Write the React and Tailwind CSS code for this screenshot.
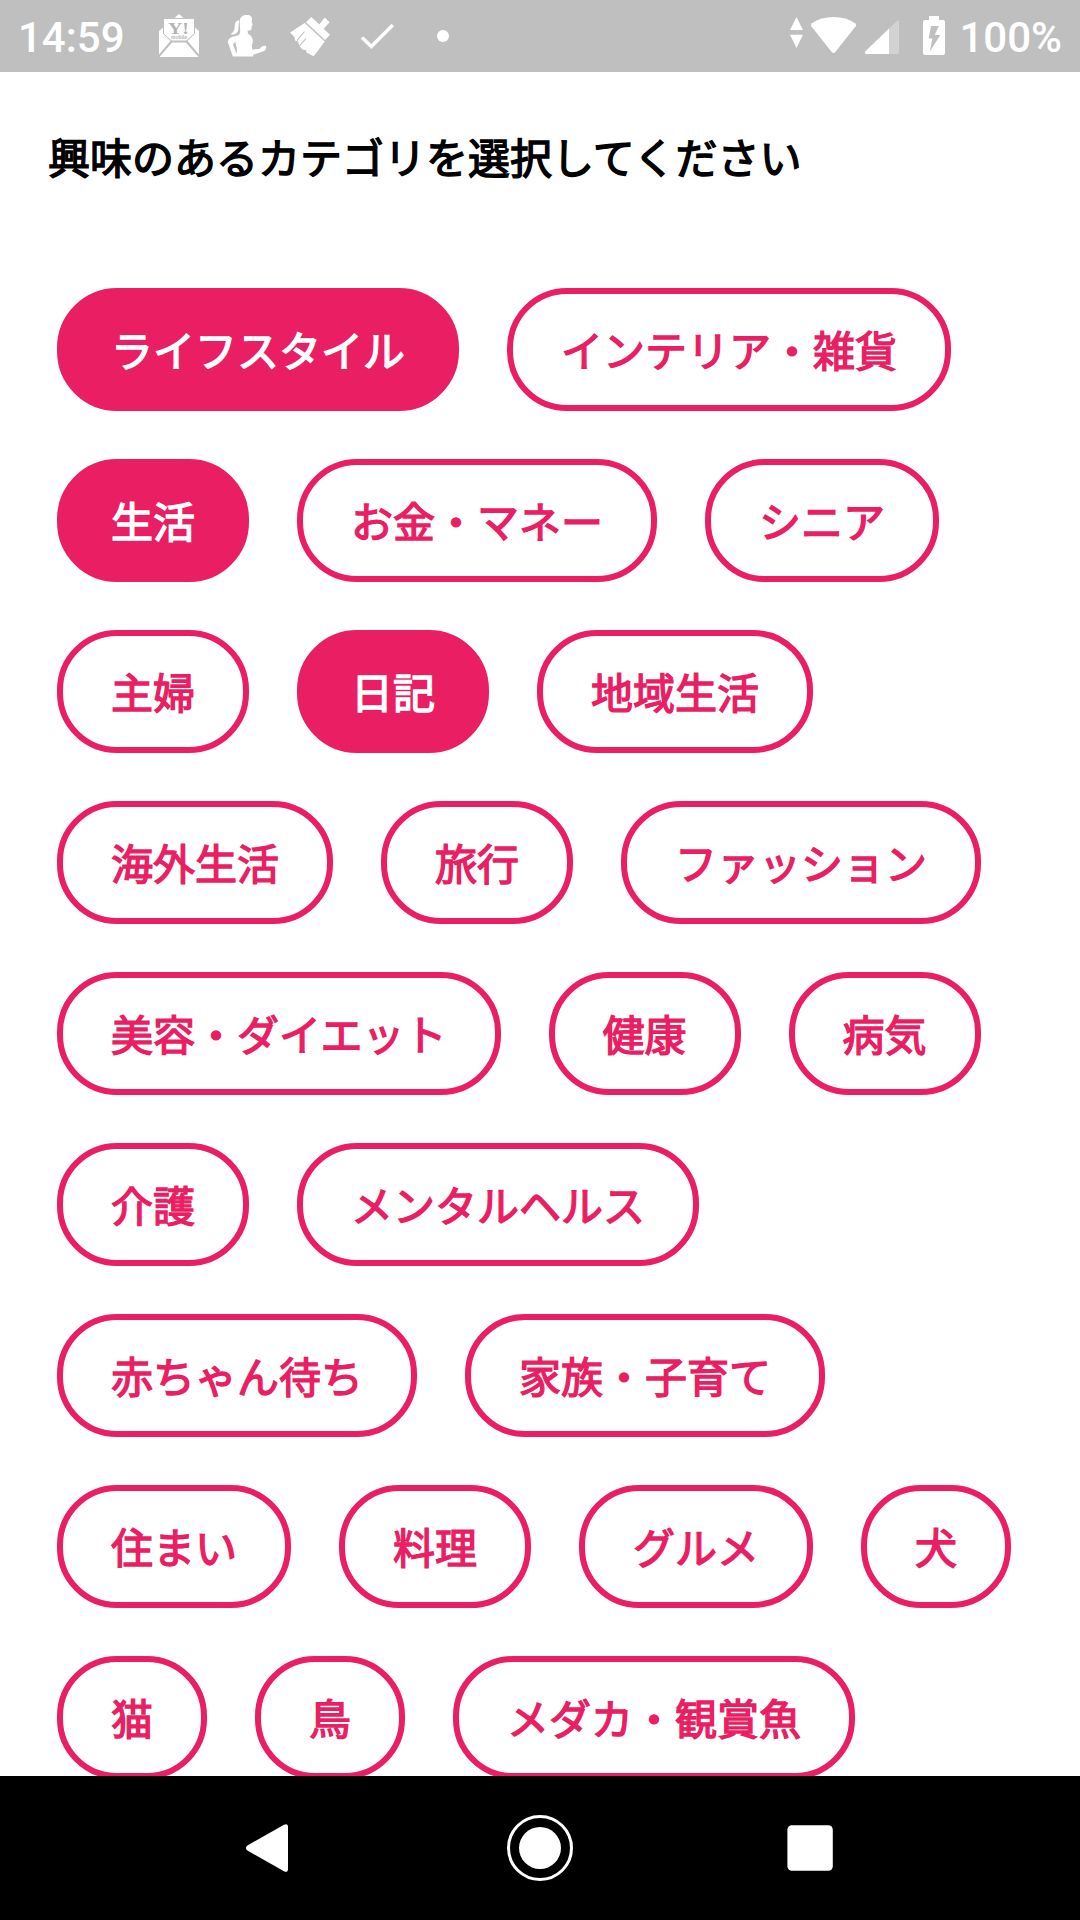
import React from "react";

const ROWS = [
  [["ライフスタイル", true], ["インテリア・雑貨"]],
  [["生活", true], ["お金・マネー"], ["シニア"]],
  [["主婦"], ["日記", true], ["地域生活"]],
  [["海外生活"], ["旅行"], ["ファッション"]],
  [["美容・ダイエット"], ["健康"], ["病気"]],
  [["介護"], ["メンタルヘルス"]],
  [["赤ちゃん待ち"], ["家族・子育て"]],
  [["住まい"], ["料理"], ["グルメ"], ["犬"]],
  [["猫"], ["鳥"], ["メダカ・観賞魚"]],
];

function Chip({ label, selected }) {
  return (
    <button
      className={
        "h-[123px] shrink-0 whitespace-nowrap rounded-[60px] border-6 border-[#e91e63] px-12 pb-[2px] text-[42px] leading-[42px] font-normal [-webkit-text-stroke:1.4px_currentColor] " +
        (selected ? "bg-[#e91e63] text-white" : "bg-white text-[#e91e63]")
      }
    >
      {label}
    </button>
  );
}

function StatusBar() {
  return (
    <header className="flex h-[72px] shrink-0 items-center justify-between bg-[#bfbfbf] pr-[18px] pl-[18px] font-['Roboto',sans-serif] text-[42px] leading-[72px] font-medium text-white">
      <div className="flex items-center">
        <span className="w-[137px] pt-1">14:59</span>
        <div className="flex gap-[18px]">
          {/* mail */}
          <svg className="size-12" viewBox="155 12 48 48" fill="#fff">
            <path d="M174.500 18 179 14l4.500 4z" />
            <path d="M164 19h30v14.500l-7.500 7h-15L164 33.500z" />
            <path d="M163 27.500v6l7.500 7.500L159 54.500V31zM195 27.500v6l-7.500 7.500L199 54.500V31z" />
            <path d="M172 42.500h14L198.500 57h-39z" />
            <text x="178.500" y="33.500" textAnchor="middle" fontSize="17" fontWeight="700" fontFamily="Liberation Serif, serif" fill="#b4b4b4" textLength="21" lengthAdjust="spacingAndGlyphs">Y!</text>
            <text x="179" y="39" textAnchor="middle" fontSize="5.500" fontWeight="700" fontFamily="Liberation Sans, sans-serif" fill="#b4b4b4" textLength="16" lengthAdjust="spacingAndGlyphs">mobile</text>
          </svg>
          {/* runner */}
          <svg className="size-12" viewBox="221 12 48 48" fill="#fff">
            <path d="M239.700 22C239.500 17 243 15 247 15c4 0 5.300 2 5 5l-.3 2 1.100 3.200-1.200.8-.2 3.500c-.5 1.200-2 1.200-3.900 1l.5 3.300c3 1.500 4.800 4 5 7.200l-1.200 4.500.5 4.200 7.500-1c1.500-2.500 4.500-3.500 6.300-2.500.5 2-.5 4.500-2.700 5l-10 3.500-.4 1.800H236.200l.8-7-1.800-8-2.200 3c1 3 3 7 4 12h-4.200L227.800 42c.7-4 3-5 7-5.800 4-.7 5.200-1.700 5.400-5z" />
            <path d="M238.300 20.200c-3.500 1-3.500 4.500-3.700 7.500-.2 3-1.600 5-4.100 6.600 4 1 7.300-1 7.800-4.300.4-2.700.2-6 .8-9z" />
          </svg>
          {/* brush */}
          <svg className="size-12" viewBox="287 12 48 48" fill="#fff">
            <path d="m306 22.300 5.300-5.300 8 7.500 5.500-7 4.800 4.700-6 6.500 6.400 6-5 5.300z" />
            <path d="m304.700 23 20 18.500L318.500 50 313.500 56.300l-7-3.800-.5-2.500-3.500-.5-3-3.500-1.500-4.500-3-1-.5-3.500-4.500-4.500z" />
            <path d="m304.500 31.500-7.500 9M306 38.500l-6.500 7.500" stroke="#bfbfbf" strokeWidth="1.100" fill="none" />
          </svg>
          {/* check */}
          <svg className="size-12" viewBox="353 12 48 48" fill="none" stroke="#fff" strokeWidth="3.400">
            <path d="m362 37.500 9.300 9L392.800 25" />
          </svg>
          <svg className="size-12" viewBox="419 12 48 48" fill="#fff">
            <circle cx="443" cy="36" r="6" />
          </svg>
        </div>
      </div>
      <div className="flex items-center">
        {/* data activity */}
        <svg className="h-[72px] w-[18px]" viewBox="788 0 18 72" fill="#fff">
          <path d="M796.500 17 803 30h-13zM790 34.700h13L796.500 48z" />
        </svg>
        {/* wifi */}
        <svg className="h-[72px] w-[55px]" viewBox="806 0 55 72" fill="#fff">
          <path d="M811.300 26.200q-1.300-1.700.6-3Q821 17 833.500 17t21.600 6.200q1.900 1.300.6 3L835.300 52q-1.800 1.800-3.600 0z" />
        </svg>
        {/* signal */}
        <svg className="h-[72px] w-[50px]" viewBox="861 0 50 72" fill="#fff">
          <path d="M889 28.500V54h-23q-2-.6-.8-2.500z" />
          <path fillOpacity=".3" d="m889 28.500 8.500-8q1.500-1 1.500 1V52q0 2-2 2h-8z" />
        </svg>
        {/* battery */}
        <svg className="h-[72px] w-12" viewBox="911 0 48 72" fill="#fff">
          <path fillRule="evenodd" d="M929 16h10v4h4q2 0 2 2v31q0 2-2 2h-18q-2 0-2-2V22q0-2 2-2h4zM931 26l-2.300 12.500h3.700l-2.500 13L940.300 35h-5.500l4-9z" />
        </svg>
        <span className="pt-1">100%</span>
      </div>
    </header>
  );
}

function NavBar() {
  return (
    <nav className="flex h-36 shrink-0 items-center justify-center gap-[198px] bg-black">
      <svg className="size-[72px]" viewBox="234 1812 72 72" fill="#fff">
        <path d="M247 1845.700 284 1824.700Q288 1823 288 1827v42q0 4-4 2.300L247 1850.300q-2.200-2.300 0-4.600z" />
      </svg>
      <svg className="size-[72px]" viewBox="504 1812 72 72" fill="#fff">
        <circle cx="540" cy="1848" r="21" />
        <circle cx="540" cy="1848" r="31.500" fill="none" stroke="#fff" strokeWidth="3" />
      </svg>
      <svg className="size-[72px]" viewBox="774 1812 72 72" fill="#fff">
        <rect x="787.400" y="1825.300" width="45.400" height="45.400" rx="4.500" />
      </svg>
    </nav>
  );
}

export default function App() {
  return (
    <div className="flex h-[1920px] w-[1080px] flex-col overflow-hidden bg-white font-['Noto_Sans_CJK_JP',sans-serif]">
      <StatusBar />
      <main className="min-h-0 flex-1 overflow-hidden">
        <h1 className="mt-[53px] pl-12 text-[42px] leading-[62px] font-normal text-black [-webkit-text-stroke:1.4px_currentColor]">
          興味のあるカテゴリを選択してください
        </h1>
        <div className="mt-[101px] flex flex-col gap-12 pl-[57px]">
          {ROWS.map((row, i) => (
            <div key={i} className="flex gap-12">
              {row.map(([label, selected]) => (
                <Chip key={label} label={label} selected={selected} />
              ))}
            </div>
          ))}
        </div>
      </main>
      <NavBar />
    </div>
  );
}
